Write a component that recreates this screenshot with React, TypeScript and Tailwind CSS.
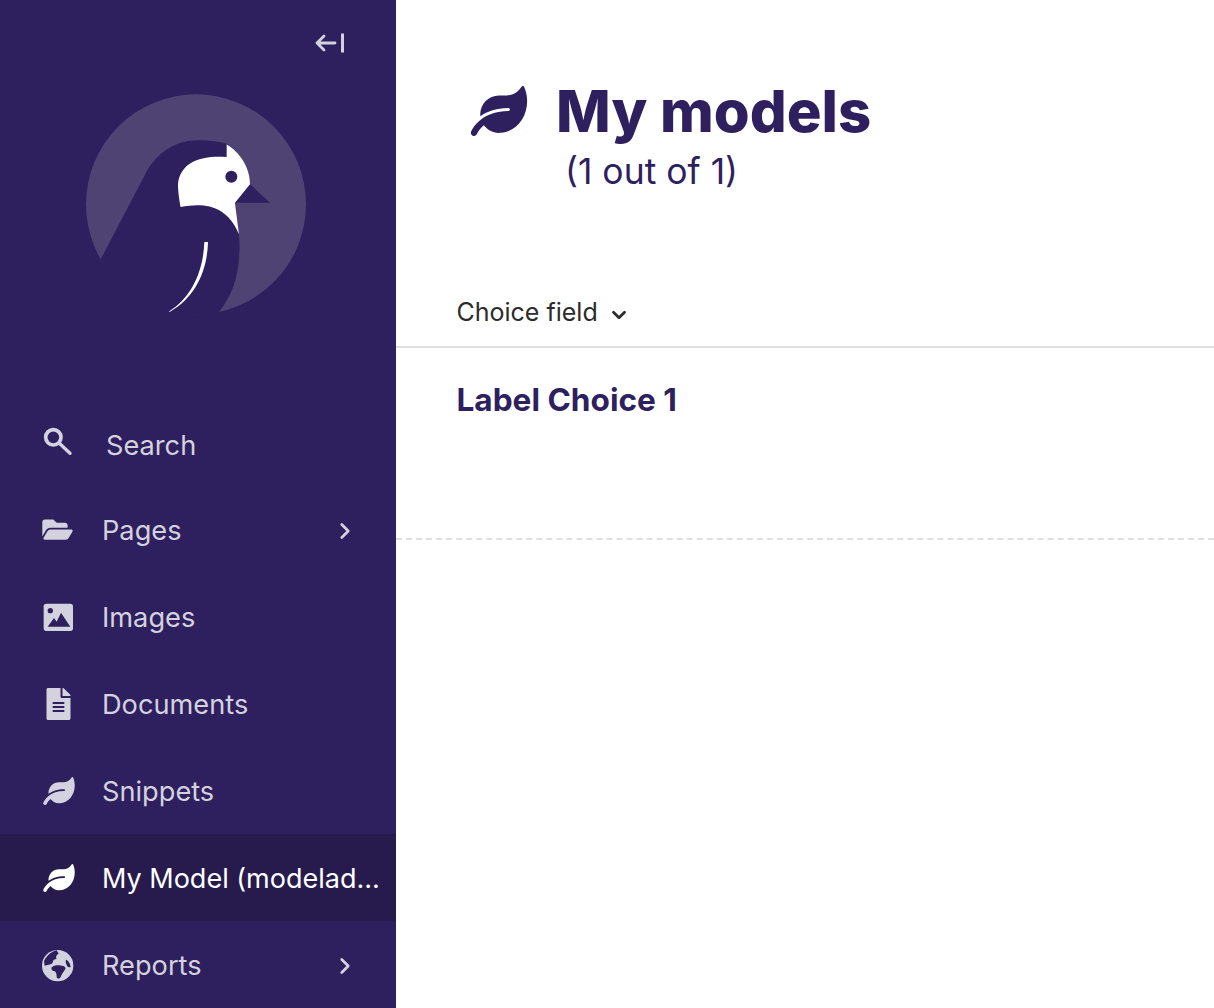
import React from 'react';
import { FaFolderOpen, FaFileAlt, FaLeaf } from 'react-icons/fa';
import { ChevronRight, ChevronDown } from 'lucide-react';

const Logo = () => (
  <svg viewBox="0 0 750 750" className="w-[250px] h-[250px]">
    <circle cx="378" cy="370" r="330" fill="#4f4373" />
    <path d="M92 535 L228 275 C262 215 315 178 385 178 C420 178 450 182 475 190 L540 310 L600 365 L497 365 L507 460 C515 570 490 640 445 695 C405 703 350 703 298 692 C210 670 135 615 92 535 Z" fill="#2e1f5e" />
    <path d="M470 190 L470 228 C400 222 330 240 324 310 C324 340 332 378 332 378 C400 365 470 370 507 460 L495 365 L540 310 C540 260 510 215 470 190 Z" fill="#ffffff" />
    <circle cx="484" cy="287" r="18" fill="#2e1f5e" />
    <path d="M403 483 L414 483 C412 570 375 650 300 692 L296 692 C365 650 400 570 403 483 Z" fill="#ffffff" />
  </svg>
);

const CollapseIcon = () => (
  <svg viewBox="0 0 30 22" className="w-[30px] h-[22px]" fill="none" stroke="#d5d2df" strokeWidth="2.8" strokeLinecap="round" strokeLinejoin="round">
    <path d="M2 11 H20 M9 4 L2 11 L9 18" />
    <path d="M27.5 1.5 V20.5" strokeLinecap="butt" strokeWidth="3" />
  </svg>
);

const SearchIcon = () => (
  <svg viewBox="0 0 132 120" className="w-[44px] h-[40px] ml-[-6px] mb-[5px]" fill="none" stroke="currentColor" strokeLinecap="round">
    <circle cx="52" cy="52" r="23" strokeWidth="11" />
    <path d="M70 70 L102 100" strokeWidth="10" />
  </svg>
);

const ImageIcon = () => (
  <svg viewBox="0 0 132 120" className="w-[44px] h-[40px] ml-[-6px] mt-[3px]">
    <rect x="23" y="17" width="88" height="82" rx="8" fill="currentColor" />
    <circle cx="43" cy="38" r="8" fill="#2e1f5e" />
    <path d="M35 86 L54 60 L62 71 L75 44 L103 86 Z" fill="#2e1f5e" />
  </svg>
);

const GlobeIcon = () => (
  <svg viewBox="0 0 132 120" className="w-[44px] h-[40px] ml-[-6px] mt-[1px]">
    <circle cx="65" cy="62" r="47" fill="currentColor" />
    <path d="M24 48 C32 32 46 20 62 16 L68 26 C62 30 58 34 62 42 C54 42 50 46 50 54 C42 60 34 60 26 62 Z" fill="#2e1f5e" />
    <path d="M46 68 C54 60 66 60 76 62 C84 62 90 66 88 72 C84 80 78 84 74 96 C70 102 64 102 62 96 C62 86 60 78 52 78 C48 76 46 72 46 68 Z" fill="#2e1f5e" />
    <path d="M90 44 C96 46 102 52 104 66 C98 68 94 66 92 60 C90 54 88 50 90 44 Z" fill="#2e1f5e" />
  </svg>
);

const NavItem = ({ icon, label, chevron, active, search }: { icon: React.ReactNode; label: string; chevron?: boolean; active?: boolean; search?: boolean }) => (
  <div className={`flex items-center h-[87px] pl-[42px] ${active ? 'bg-[#261b4c] text-white' : 'text-[#d5d2df]'}`}>
    <div className="w-[60px] shrink-0 flex items-center">{icon}</div>
    <span className={`leading-none whitespace-nowrap ${active ? 'text-[27px]' : 'text-[27.2px]'} ${search ? 'ml-1 mt-[6px]' : 'mt-[2px]'}`}>{label}</span>
    {chevron && <ChevronRight className="ml-auto mr-[38px] mt-[2px] w-[26px] h-[26px]" strokeWidth={2.5} />}
  </div>
);

const App = () => {
  return (
    <div className="flex h-[1008px] w-[1214px] overflow-hidden bg-white font-['Inter',sans-serif]">
      <aside className="w-[396px] shrink-0 bg-[#2e1f5e] flex flex-col">
        <div className="flex justify-end pt-[32px] pr-[51px]">
          <CollapseIcon />
        </div>
        <div className="flex justify-center pt-[27px] ml-[-6px] h-[348px]">
          <Logo />
        </div>
        <nav className="flex flex-col mt-[-1px]">
          <NavItem search icon={<SearchIcon />} label="Search" />
          <NavItem chevron icon={<FaFolderOpen className="w-[31px] h-[27px]" />} label="Pages" />
          <NavItem icon={<ImageIcon />} label="Images" />
          <NavItem icon={<FaFileAlt className="w-[25px] h-[32px] ml-[4px]" />} label="Documents" />
          <NavItem icon={<FaLeaf className="w-[32px] h-[28px] ml-[1px]" />} label="Snippets" />
          <NavItem active icon={<FaLeaf className="w-[32px] h-[28px] ml-[1px]" />} label="My Model (modelad..." />
          <NavItem chevron icon={<GlobeIcon />} label="Reports" />
        </nav>
      </aside>
      <main className="flex-1 min-w-0 text-[#2e1f5e]">
        <header className="pl-[74px] pt-[79px] h-[288px]">
          <div className="flex items-center gap-[28px] h-[64px]">
            <FaLeaf className="w-[58px] h-[50px]" />
            <h1 className="text-[58px] font-extrabold leading-none">My models</h1>
          </div>
          <div className="pl-[95px] mt-[7px] text-[35.5px] leading-[44px]">(1 out of 1)</div>
        </header>
        <div className="h-[60px] pl-[60.5px] border-b-2 border-[#e0e0e0] flex items-start">
          <span className="text-[25px] leading-[48px] text-[#2b2b2b]">Choice field</span>
          <ChevronDown className="ml-[10px] mt-[16px] w-[22px] h-[22px] text-[#2b2b2b]" strokeWidth={3} />
        </div>
        <div className="h-[192px] pl-[60.5px] pt-[32px] border-b-2 border-dashed border-[#e0e0e0]">
          <span className="text-[31.6px] font-bold leading-[40px]">Label Choice 1</span>
        </div>
      </main>
    </div>
  );
};

export default App;
